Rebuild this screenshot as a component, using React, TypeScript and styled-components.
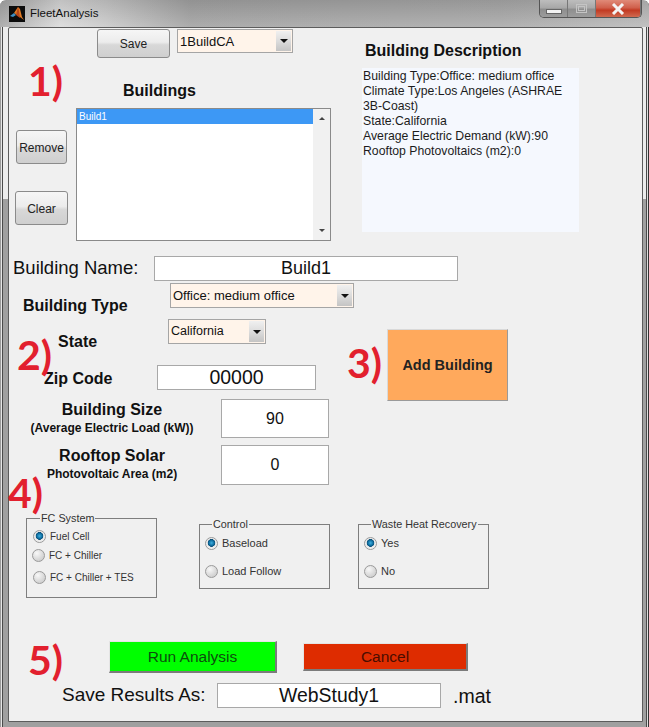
import React from 'react';
import styled, { createGlobalStyle } from 'styled-components';

const Global = createGlobalStyle`
  html, body {
    margin: 0;
    padding: 0;
    background: #fff;
  }
  * {
    box-sizing: border-box;
  }
`;

const Frame = styled.div`
  position: relative;
  width: 649px;
  height: 727px;
  padding: 0 6px 5px 8px;
  font-family: 'Liberation Sans', Arial, sans-serif;
  color: #111;
  overflow: hidden;
  border-radius: 6px 6px 0 0;
  background:
    linear-gradient(90deg, #9a9a9a 0 1px, #e6e6e6 1px 2px, #4a4a4a 2px 3px, transparent 3px 646px, #4a4a4a 646px 647px, #e0e0e0 647px 648px, #333 648px 649px),
    linear-gradient(180deg, #ececec 0 199px, #a0a0a0 199px);
`;

const TitleBar = styled.div`
  height: 27px;
  margin: 0 -6px 0 -8px;
  padding: 6px 0 0 9px;
  display: flex;
  align-items: flex-start;
  gap: 5px;
  font-size: 11.5px;
  line-height: 15px;
  background:
    linear-gradient(180deg, rgba(0, 0, 0, 0.12) 0, rgba(255, 255, 255, 0.08) 100%),
    linear-gradient(90deg, #a9a9a9 0, #dcdcdc 60px, #cccccc 105px, #a6a6a6 190px, #acacac 500px, #bcbcbc 649px);
`;

const WindowButtons = styled.div`
  position: absolute;
  top: 0;
  right: 7px;
  width: 103px;
  height: 18px;
  display: flex;
  border: 1px solid #555;
  border-top: 0;
  border-radius: 0 0 5px 5px;
  overflow: hidden;
`;

const WindowButton = styled.div<{ $close?: boolean }>`
  width: 28px;
  flex: ${({ $close }) => ($close ? '1' : 'none')};
  display: flex;
  align-items: center;
  justify-content: center;
  border-right: 1px solid #777;
  background: ${({ $close }) =>
    $close
      ? 'linear-gradient(180deg, #e08a78 0, #d0604c 45%, #c23a22 60%, #d06a50 100%)'
      : 'linear-gradient(180deg, #bdbdbd 0, #a8a8a8 45%, #8e8e8e 55%, #9c9c9c 100%)'};
`;

const MinGlyph = styled.span`
  width: 16px;
  height: 5px;
  margin-top: 5px;
  background: #f2f2f2;
  border: 1px solid #666;
`;

const MaxGlyph = styled.span`
  width: 11px;
  height: 9px;
  border: 1px solid #c4c4c4;
  display: flex;
  align-items: center;
  justify-content: center;

  &::after {
    content: '';
    width: 5px;
    height: 3px;
    border: 1px solid #c4c4c4;
  }
`;

const Client = styled.div`
  position: relative;
  height: 695px;
  background: #f0f0f0;
  border: 1px solid #5c5c5c;
  border-radius: 2px 2px 0 0;
`;

const StepTag = styled.div<{ $x: number; $y: number }>`
  position: absolute;
  left: ${({ $x }) => $x}px;
  top: ${({ $y }) => $y}px;
  font-family: Lato, 'Open Sans', sans-serif;
  font-weight: 700;
  font-size: 41px;
  line-height: 41px;
  color: #e2202e;
`;

const TopSection = styled.section`
  height: 228px;
  display: flex;
`;

const LeftColumn = styled.div`
  width: 353px;
  padding-top: 1px;
`;

const Toolbar = styled.div`
  display: flex;
  align-items: flex-start;
  padding-left: 88px;
  gap: 7px;
`;

const PushButton = styled.button<{ $w: number; $h: number }>`
  width: ${({ $w }) => $w}px;
  height: ${({ $h }) => $h}px;
  padding: 1px 0 0;
  font-family: inherit;
  font-size: 12px;
  color: #222;
  border: 1px solid #8b8b8b;
  border-radius: 3px;
  background: linear-gradient(180deg, #f6f6f6 0, #ececec 45%, #d8d8d8 55%, #cfcfcf 100%);
`;

const Combo = styled.div<{ $w: number; $h: number; $size: number }>`
  width: ${({ $w }) => $w}px;
  height: ${({ $h }) => $h}px;
  display: flex;
  align-items: stretch;
  font-size: ${({ $size }) => $size}px;
  background: #fff4ea;
  border: 1px solid #a5a5a5;
  padding: 1px;
`;

const ComboText = styled.span`
  flex: 1;
  padding: 3px 1px;
  line-height: 15px;
  white-space: nowrap;
`;

const ComboArrow = styled.span`
  width: 15px;
  display: flex;
  align-items: center;
  justify-content: center;
  background: linear-gradient(180deg, #f0f0f0 0, #dcdcdc 50%, #c4c4c4 100%);

  &::after {
    content: '';
    border-left: 4px solid transparent;
    border-right: 4px solid transparent;
    border-top: 4px solid #111;
  }
`;

const ListTitle = styled.div`
  margin: 24px 0 0 114px;
  font-weight: 700;
  font-size: 16px;
  line-height: 17px;
`;

const ListRow = styled.div`
  display: flex;
  margin-top: 9px;
`;

const SideButtons = styled.div`
  width: 67px;
  padding: 22px 8px 0 6px;
  display: flex;
  flex-direction: column;
  align-items: center;
  gap: 27px;
`;

const ListBox = styled.div`
  width: 255px;
  height: 133px;
  display: flex;
  background: #fff;
  border: 1px solid #8a8a8a;
`;

const ListItems = styled.div`
  flex: 1;
`;

const ListItem = styled.div`
  height: 15px;
  padding-left: 2px;
  font-size: 10px;
  line-height: 15px;
  color: #fff;
  background: #3d98f5;
`;

const ScrollTrack = styled.div`
  width: 17px;
  display: flex;
  flex-direction: column;
  justify-content: space-between;
  align-items: center;
  padding: 8px 0;
  background: #f1f1f1;
`;

const ScrollUp = styled.span`
  border-left: 3.5px solid transparent;
  border-right: 3.5px solid transparent;
  border-bottom: 3px solid #444;
`;

const ScrollDown = styled.span`
  border-left: 3.5px solid transparent;
  border-right: 3.5px solid transparent;
  border-top: 3px solid #444;
`;

const RightColumn = styled.div`
  padding-top: 14px;
`;

const DescriptionTitle = styled.div`
  margin-left: 3px;
  font-weight: 700;
  font-size: 16px;
  line-height: 18px;
`;

const Description = styled.div`
  width: 217px;
  height: 164px;
  margin-top: 8px;
  padding: 1px;
  font-size: 12.25px;
  line-height: 15px;
  color: #1c1c1c;
  background: #f5f8fe;
`;

const DescriptionLine = styled.div``;

const NameRow = styled.div`
  display: flex;
  align-items: flex-start;
  padding-left: 4px;
`;

const NameLabel = styled.div`
  width: 141px;
  font-size: 18.5px;
  line-height: 19px;
  padding-top: 2px;
`;

const TextBox = styled.div<{ $w: number; $h: number; $size: number }>`
  width: ${({ $w }) => $w}px;
  height: ${({ $h }) => $h}px;
  display: flex;
  align-items: center;
  justify-content: center;
  font-size: ${({ $size }) => $size}px;
  color: #111;
  background: #fff;
  border: 1px solid #a8a8a8;
`;

const TypeRow = styled.div`
  display: flex;
  align-items: flex-start;
  margin-top: 2px;
  padding-left: 14px;
`;

const BoldLabel = styled.div<{ $w: number; $top: number }>`
  width: ${({ $w }) => $w}px;
  flex: none;
  padding-top: ${({ $top }) => $top}px;
  font-weight: 700;
  font-size: 16px;
  line-height: 18px;
`;

const FormSection = styled.section`
  display: flex;
  margin-top: 4px;
`;

const FormColumn = styled.div`
  width: 338px;
`;

const StateRow = styled.div`
  display: flex;
  align-items: flex-start;
  padding-left: 49px;
`;

const ZipRow = styled.div`
  display: flex;
  align-items: flex-start;
  margin-top: 14px;
  padding-left: 35px;
`;

const MetricRow = styled.div<{ $top: number }>`
  display: flex;
  align-items: center;
  margin-top: ${({ $top }) => $top}px;
`;

const MetricLabel = styled.div`
  width: 206px;
  margin-right: 6px;
  padding-bottom: 2px;
  text-align: center;
`;

const MetricTitle = styled.div`
  margin-bottom: 2px;
  font-weight: 700;
  font-size: 16px;
  line-height: 18px;
`;

const MetricNote = styled.div`
  font-weight: 700;
  font-size: 12px;
  line-height: 14px;
`;

const AddColumn = styled.div`
  padding: 10px 0 0 40px;
`;

const AddButton = styled.button`
  width: 121px;
  height: 72px;
  padding: 0;
  font-family: inherit;
  font-weight: 700;
  font-size: 14.5px;
  color: #222;
  background: #ffa95c;
  border: 1px solid #d9d9d9;
  border-right-color: #9a9a9a;
  border-bottom-color: #9a9a9a;
`;

const GroupRow = styled.section`
  display: flex;
  align-items: flex-start;
  margin-top: 28px;
  padding-left: 17px;
`;

const Group = styled.fieldset<{ $h: number; $top?: number; $gap: number; $left: number }>`
  width: 131px;
  height: ${({ $h }) => $h}px;
  margin: ${({ $top }) => $top ?? 0}px ${({ $gap }) => $gap}px 0 0;
  padding: 0 0 0 ${({ $left }) => $left}px;
  border: 1px solid #7e7e7e;
  min-inline-size: auto;
`;

const GroupLegend = styled.legend`
  margin-left: 7px;
  padding: 0 1px;
  font-size: 10.8px;
  line-height: 11px;
  color: #333;
`;

const RadioList = styled.div<{ $gap: number; $top: number; $size: number }>`
  display: flex;
  flex-direction: column;
  gap: ${({ $gap }) => $gap}px;
  padding-top: ${({ $top }) => $top}px;
  font-size: ${({ $size }) => $size}px;
  color: #333;
`;

const RadioRow = styled.div<{ $extra?: number; $shift?: number }>`
  display: flex;
  align-items: center;
  gap: 4px;
  height: 12px;
  margin-top: ${({ $extra }) => $extra ?? 0}px;
  margin-left: ${({ $shift }) => $shift ?? 0}px;
`;

const RadioDot = styled.span<{ $on?: boolean }>`
  width: 13px;
  height: 13px;
  flex: none;
  border-radius: 50%;
  border: 1px solid #9a9a9a;
  background: ${({ $on }) =>
    $on
      ? 'radial-gradient(circle at 50% 45%, #3fb0e0 0, #0f6ea0 32%, #0b4f78 44%, #e8e8e8 50%, #fff 100%)'
      : 'radial-gradient(circle at 35% 30%, #f8f8f8 0, #dadada 55%, #c4c4c4 100%)'};
`;

const ActionRow = styled.section`
  display: flex;
  align-items: center;
  margin-top: 43px;
  padding-left: 100px;
  gap: 26px;
`;

const ActionButton = styled.button<{ $w: number; $h: number; $bg: string; $ink: string }>`
  width: ${({ $w }) => $w}px;
  height: ${({ $h }) => $h}px;
  padding: 0;
  font-family: inherit;
  font-size: 15.5px;
  color: ${({ $ink }) => $ink};
  background: ${({ $bg }) => $bg};
  border: 1px solid #e4e4e4;
  border-right: 2px solid #7b7b7b;
  border-bottom: 2px solid #7b7b7b;
`;

const SaveRow = styled.section`
  display: flex;
  align-items: center;
  margin-top: 9px;
  padding-left: 53px;
`;

const SaveLabel = styled.div`
  width: 155px;
  font-size: 19px;
`;

const SaveExt = styled.div`
  margin-left: 12px;
  padding-top: 3px;
  font-size: 19.5px;
`;

const MatlabIcon = () => (
  <svg width="16" height="16" viewBox="0 0 16 16">
    <rect width="16" height="16" fill="#0c0c0c" />
    <path d="M1 10 L5 7 L7 9 L4 11 Z" fill="#3f8fc4" />
    <path d="M5 7 L9 1 L11 3 L13 11 L15 14 L11 11 L8 9 Z" fill="#e07a24" />
    <path d="M9 1 L7 9 L11 12 L10 5 Z" fill="#b8461a" />
  </svg>
);

const descriptionLines = [
  'Building Type:Office: medium office',
  'Climate Type:Los Angeles (ASHRAE',
  '3B-Coast)',
  'State:California',
  'Average Electric Demand (kW):90',
  'Rooftop Photovoltaics (m2):0',
];

const App: React.FC = () => {
  return (
    <Frame>
      <Global />
      <TitleBar>
        <MatlabIcon />
        <span>FleetAnalysis</span>
      </TitleBar>
      <WindowButtons>
        <WindowButton>
          <MinGlyph />
        </WindowButton>
        <WindowButton>
          <MaxGlyph />
        </WindowButton>
        <WindowButton $close>
          <svg width="14" height="12" viewBox="0 0 14 12">
            <path d="M2 1 L12 11 M12 1 L2 11" stroke="#f4f4f4" strokeWidth="3" />
          </svg>
        </WindowButton>
      </WindowButtons>

      <Client>
        <StepTag $x={19} $y={32}>1)</StepTag>
        <StepTag $x={8} $y={306}>2)</StepTag>
        <StepTag $x={338} $y={314}>3)</StepTag>
        <StepTag $x={-1} $y={444}>4)</StepTag>
        <StepTag $x={19} $y={611}>5)</StepTag>

        <TopSection>
          <LeftColumn>
            <Toolbar>
              <PushButton $w={73} $h={29}>Save</PushButton>
              <Combo $w={116} $h={24} $size={13}>
                <ComboText>1BuildCA</ComboText>
                <ComboArrow />
              </Combo>
            </Toolbar>
            <ListTitle>Buildings</ListTitle>
            <ListRow>
              <SideButtons>
                <PushButton $w={51} $h={34}>Remove</PushButton>
                <PushButton $w={53} $h={34}>Clear</PushButton>
              </SideButtons>
              <ListBox>
                <ListItems>
                  <ListItem>Build1</ListItem>
                </ListItems>
                <ScrollTrack>
                  <ScrollUp />
                  <ScrollDown />
                </ScrollTrack>
              </ListBox>
            </ListRow>
          </LeftColumn>
          <RightColumn>
            <DescriptionTitle>Building Description</DescriptionTitle>
            <Description>
              {descriptionLines.map((line) => (
                <DescriptionLine key={line}>{line}</DescriptionLine>
              ))}
            </Description>
          </RightColumn>
        </TopSection>

        <NameRow>
          <NameLabel>Building Name:</NameLabel>
          <TextBox $w={304} $h={25} $size={18}>Build1</TextBox>
        </NameRow>
        <TypeRow>
          <BoldLabel $w={147} $top={14}>Building Type</BoldLabel>
          <Combo $w={184} $h={25} $size={13}>
            <ComboText>Office: medium office</ComboText>
            <ComboArrow />
          </Combo>
        </TypeRow>

        <FormSection>
          <FormColumn>
            <StateRow>
              <BoldLabel $w={110} $top={14}>State</BoldLabel>
              <Combo $w={98} $h={25} $size={12.5}>
                <ComboText>California</ComboText>
                <ComboArrow />
              </Combo>
            </StateRow>
            <ZipRow>
              <BoldLabel $w={113} $top={5}>Zip Code</BoldLabel>
              <TextBox $w={159} $h={25} $size={19.5}>00000</TextBox>
            </ZipRow>
            <MetricRow $top={9}>
              <MetricLabel>
                <MetricTitle>Building Size</MetricTitle>
                <MetricNote>(Average Electric Load (kW))</MetricNote>
              </MetricLabel>
              <TextBox $w={108} $h={39} $size={16}>90</TextBox>
            </MetricRow>
            <MetricRow $top={7}>
              <MetricLabel>
                <MetricTitle>Rooftop Solar</MetricTitle>
                <MetricNote>Photovoltaic Area (m2)</MetricNote>
              </MetricLabel>
              <TextBox $w={108} $h={40} $size={16}>0</TextBox>
            </MetricRow>
          </FormColumn>
          <AddColumn>
            <AddButton>Add Building</AddButton>
          </AddColumn>
        </FormSection>

        <GroupRow>
          <Group $h={85} $gap={42} $left={6}>
            <GroupLegend>FC System</GroupLegend>
            <RadioList $gap={7} $top={6} $size={10}>
              <RadioRow><RadioDot $on />Fuel Cell</RadioRow>
              <RadioRow $shift={-1}><RadioDot />FC + Chiller</RadioRow>
              <RadioRow $extra={3}><RadioDot />FC + Chiller + TES</RadioRow>
            </RadioList>
          </Group>
          <Group $h={70} $top={6} $gap={28} $left={5}>
            <GroupLegend>Control</GroupLegend>
            <RadioList $gap={16} $top={7} $size={11}>
              <RadioRow><RadioDot $on />Baseload</RadioRow>
              <RadioRow><RadioDot />Load Follow</RadioRow>
            </RadioList>
          </Group>
          <Group $h={70} $top={6} $gap={0} $left={5}>
            <GroupLegend>Waste Heat Recovery</GroupLegend>
            <RadioList $gap={16} $top={7} $size={11}>
              <RadioRow><RadioDot $on />Yes</RadioRow>
              <RadioRow><RadioDot />No</RadioRow>
            </RadioList>
          </Group>
        </GroupRow>

        <ActionRow>
          <ActionButton $w={168} $h={32} $bg="#00ff00" $ink="#0d4d0d">Run Analysis</ActionButton>
          <ActionButton $w={165} $h={28} $bg="#de2c00" $ink="#4a0d00">Cancel</ActionButton>
        </ActionRow>

        <SaveRow>
          <SaveLabel>Save Results As:</SaveLabel>
          <TextBox $w={224} $h={25} $size={19.4}>WebStudy1</TextBox>
          <SaveExt>.mat</SaveExt>
        </SaveRow>
      </Client>
    </Frame>
  );
};

export default App;
